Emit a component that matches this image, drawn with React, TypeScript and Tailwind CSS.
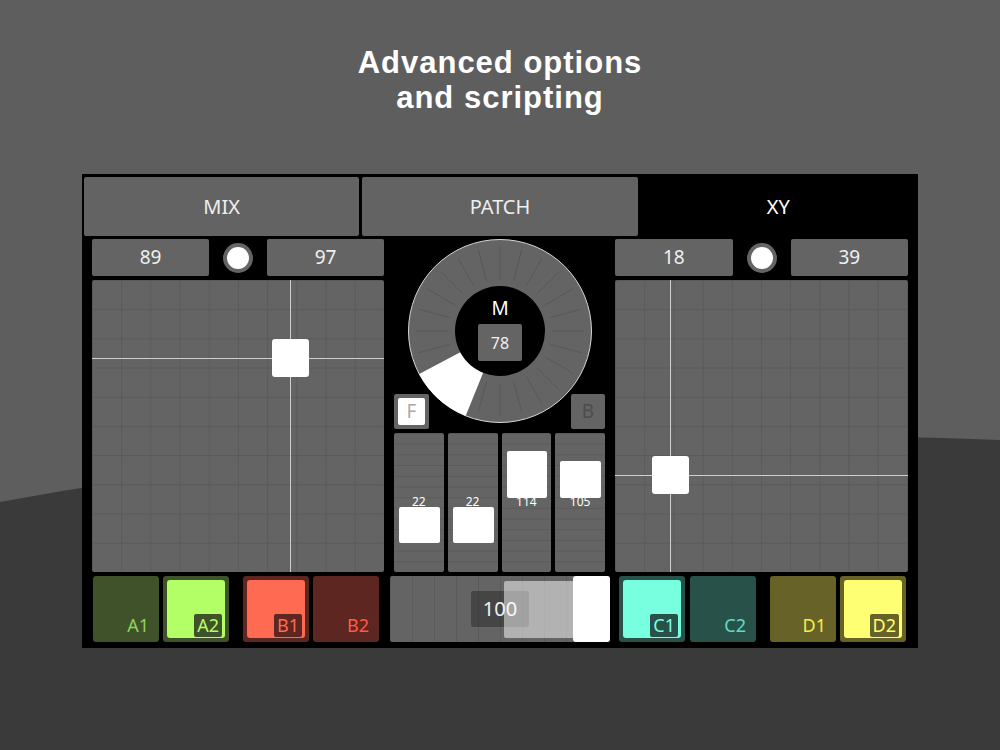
import React from "react"

type PadProps = {
  label: string
  on: boolean
  dark: string
  bright: string
  text: string
  brightText: string
}

function Pad({ label, on, dark, bright, text, brightText }: PadProps) {
  if (!on) {
    return (
      <div className={`w-[66px] h-full rounded-[3px] ${dark} flex items-end justify-end pr-[10px] pb-[5px]`}>
        <span className={`text-[18px] leading-[24px] ${text}`}>{label}</span>
      </div>
    )
  }
  return (
    <div className={`w-[66px] h-full rounded-[3px] ${dark} p-[4px]`}>
      <div className={`w-full h-full rounded-[3px] ${bright} flex items-end justify-end pr-[3px] pb-[1px]`}>
        <span className={`rounded-[2px] ${dark} px-[3px] text-[18px] leading-[23px] ${brightText}`}>{label}</span>
      </div>
    </div>
  )
}

function NumberRow({ a, b }: { a: string; b: string }) {
  return (
    <div className="flex h-[37px]">
      <div className="flex-1 rounded-[2px] bg-[#646464] flex items-center justify-center text-[19px] text-[#f0f0f0]">{a}</div>
      <div className="w-[58px] flex items-center justify-center">
        <div className="w-[30px] h-[30px] rounded-full bg-[#646464] flex items-center justify-center">
          <div className="w-[22px] h-[22px] rounded-full bg-white" />
        </div>
      </div>
      <div className="flex-1 rounded-[2px] bg-[#646464] flex items-center justify-center text-[19px] text-[#f0f0f0]">{b}</div>
    </div>
  )
}

// x,y = crosshair position inside the pad
function XYPad({ x, y }: { x: number; y: number }) {
  return (
    <div className="relative h-[292px] rounded-[2px] overflow-hidden bg-[#646464] bg-[linear-gradient(to_right,#5a5a5a_1px,transparent_1px),linear-gradient(to_bottom,#5a5a5a_1px,transparent_1px)] bg-[length:29.2px_29.2px]">
      <div className="absolute top-0 bottom-0 w-[1px] bg-[#cfcfcf]" style={{ left: x }} />
      <div className="absolute left-0 right-0 h-[1px] bg-[#cfcfcf]" style={{ top: y }} />
      <div
        className="absolute w-[37px] h-[38px] rounded-[3px] bg-white"
        style={{ left: x - 18, top: y - 19 }}
      />
    </div>
  )
}

function Knob() {
  const rOut = 91.5
  const rIn = 45
  const rad = (d: number) => (d * Math.PI) / 180
  const pt = (r: number, d: number) => `${(r * Math.cos(rad(d))).toFixed(2)} ${(r * Math.sin(rad(d))).toFixed(2)}`
  const wedge = `M ${pt(rIn, 112)} L ${pt(rOut, 112)} A ${rOut} ${rOut} 0 0 1 ${pt(rOut, 152)} L ${pt(rIn, 152)} A ${rIn} ${rIn} 0 0 0 ${pt(rIn, 112)} Z`
  const ticks = Array.from({ length: 24 }, (_, i) => i * 15)
  return (
    <svg width="186" height="186" viewBox="-93 -93 186 186">
      <circle r={rOut} fill="#646464" stroke="#d6d6d6" strokeWidth="1" />
      {ticks.map((d) => (
        <line
          key={d}
          x1={(52 * Math.cos(rad(d))).toFixed(2)}
          y1={(52 * Math.sin(rad(d))).toFixed(2)}
          x2={(84 * Math.cos(rad(d))).toFixed(2)}
          y2={(84 * Math.sin(rad(d))).toFixed(2)}
          stroke="#585858"
          strokeWidth="1"
        />
      ))}
      <path d={wedge} fill="#ffffff" />
      <circle r={rIn} fill="#000000" />
    </svg>
  )
}

const faders = [
  { value: "22", top: 74, h: 36 },
  { value: "22", top: 74, h: 36 },
  { value: "114", top: 18, h: 47 },
  { value: "105", top: 28, h: 37 },
]

export default function App() {
  return (
    <div className="relative w-[1000px] h-[750px] overflow-hidden bg-[#5e5e5e] font-['Noto_Sans',sans-serif]">
      {/* background swoosh */}
      <svg className="absolute inset-0" width="1000" height="750" viewBox="0 0 1000 750">
        <path d="M0 502 Q 450 418 1000 440 L 1000 750 L 0 750 Z" fill="#3a3a3a" />
      </svg>

      <div className="relative flex flex-col items-center">
        <h1 className="pt-[45px] text-center text-[31px] leading-[35px] font-bold tracking-[1px] text-white font-['Liberation_Sans',Arial,sans-serif]">
          Advanced options
          <br />
          and scripting
        </h1>

        <div className="mt-[59px] w-[836px] h-[474px] bg-black p-[2px] flex flex-col">
          {/* Tabs */}
          <div className="flex gap-[3px] h-[60px] pt-[1px]">
            <div className="flex-1 rounded-[2px] bg-[#636363] flex items-center justify-center text-[20px] text-[#eeeeee]">MIX</div>
            <div className="flex-1 rounded-[2px] bg-[#636363] flex items-center justify-center text-[20px] text-[#eeeeee]">PATCH</div>
            <div className="flex-1 bg-black flex items-center justify-center text-[20px] text-white">XY</div>
          </div>

          {/* Body */}
          <div className="flex px-[8px] pt-[3px] pb-[4px] gap-[6px] flex-1">
            {/* Left */}
            <div className="w-[292px] flex flex-col gap-[4px]">
              <NumberRow a="89" b="97" />
              <XYPad x={198} y={78} />
              <div className="h-[66px] flex pl-[1px]">
                <Pad label="A1" on={false} dark="bg-[#3f5229]" bright="bg-[#b2ff66]" text="text-[#8fd45a]" brightText="text-[#b2ff66]" />
                <div className="w-[4px]" />
                <Pad label="A2" on={true} dark="bg-[#3f5229]" bright="bg-[#b2ff66]" text="text-[#8fd45a]" brightText="text-[#b2ff66]" />
                <div className="w-[14px]" />
                <Pad label="B1" on={true} dark="bg-[#5e2621]" bright="bg-[#ff6a52]" text="text-[#ff5a46]" brightText="text-[#ff6a52]" />
                <div className="w-[4px]" />
                <Pad label="B2" on={false} dark="bg-[#5e2621]" bright="bg-[#ff6a52]" text="text-[#ff5a46]" brightText="text-[#ff6a52]" />
              </div>
            </div>

            {/* Center */}
            <div className="w-[220px] flex flex-col">
              <div className="grid h-[190px]">
                <div className="col-start-1 row-start-1 flex justify-center mt-[-1px]">
                  <Knob />
                </div>
                <div className="col-start-1 row-start-1 flex flex-col items-center pt-[58px]">
                  <div className="text-[19px] leading-[22px] text-white">M</div>
                  <div className="mt-[5px] w-[44px] h-[37px] rounded-[2px] bg-[#646464] flex items-center justify-center text-[16px] text-[#f0f0f0]">78</div>
                </div>
                <div className="col-start-1 row-start-1 self-end flex justify-between pl-[4px] pr-[5px]">
                  <div className="w-[35px] h-[35px] rounded-[2px] bg-[#646464] p-[4px]">
                    <div className="w-full h-full rounded-[2px] bg-white flex items-center justify-center text-[19px] text-[#a9a9a9]">F</div>
                  </div>
                  <div className="w-[34px] h-[35px] rounded-[2px] bg-[#646464] flex items-center justify-center text-[19px] text-[#4c4c4c]">B</div>
                </div>
              </div>

              <div className="mt-[4px] h-[139px] flex gap-[4px] pl-[4px] pr-[5px]">
                {faders.map((f, i) => (
                  <div
                    key={i}
                    className="relative flex-1 rounded-[2px] bg-[#646464] bg-[linear-gradient(to_bottom,#5b5b5b_1px,transparent_1px)] bg-[length:100%_10.7px]"
                  >
                    <div
                      className="absolute left-[5px] right-[4px] rounded-[2px] bg-white"
                      style={{ top: f.top, height: f.h }}
                    />
                    <div className="absolute left-0 right-0 top-[61px] text-center text-[12px] leading-[15px] text-white">{f.value}</div>
                  </div>
                ))}
              </div>

              <div className="mt-[4px] h-[66px] relative rounded-[2px] overflow-hidden bg-[#646464] bg-[linear-gradient(to_right,#5b5b5b_1px,transparent_1px)] bg-[length:22px_100%]">
                <div className="absolute left-[81px] top-[15px] w-[58px] h-[36px] rounded-[2px] bg-black/30 flex items-center justify-center text-[20px] text-[#f2f2f2]">100</div>
                <div className="absolute left-[114px] right-0 top-[5px] bottom-[4px] rounded-[2px] bg-white/50" />
                <div className="absolute left-[183px] right-0 top-0 bottom-0 rounded-[3px] bg-white" />
              </div>
            </div>

            {/* Right */}
            <div className="w-[293px] flex flex-col gap-[4px] ml-[-1px]">
              <NumberRow a="18" b="39" />
              <XYPad x={55} y={195} />
              <div className="h-[66px] flex pl-[4px]">
                <div className="w-[67px] h-full flex">
                  <Pad label="C1" on={true} dark="bg-[#285249]" bright="bg-[#78ffe0]" text="text-[#5fdcc3]" brightText="text-[#78ffe0]" />
                </div>
                <div className="w-[4px]" />
                <Pad label="C2" on={false} dark="bg-[#285249]" bright="bg-[#78ffe0]" text="text-[#5fdcc3]" brightText="text-[#78ffe0]" />
                <div className="w-[14px]" />
                <Pad label="D1" on={false} dark="bg-[#676227]" bright="bg-[#ffff73]" text="text-[#f5ee4a]" brightText="text-[#ffff73]" />
                <div className="w-[4px]" />
                <Pad label="D2" on={true} dark="bg-[#676227]" bright="bg-[#ffff73]" text="text-[#f5ee4a]" brightText="text-[#ffff73]" />
              </div>
            </div>
          </div>
        </div>
      </div>
    </div>
  )
}
